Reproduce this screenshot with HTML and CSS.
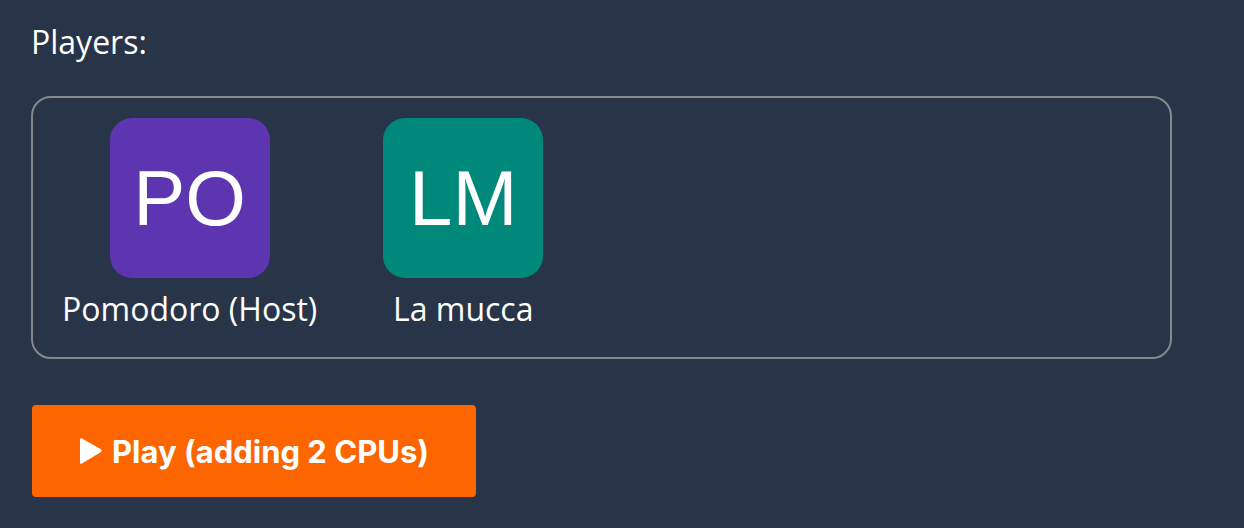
FILE: index.html
```html
<!DOCTYPE html>
<html lang="en">
<head>
<meta charset="utf-8">
<title>Lobby</title>
<link rel="stylesheet" href="styles.css">
</head>
<body>
  <main class="lobby">
    <h2 class="lobby-title">Players:</h2>
    <section class="player-list">
      <div class="player">
        <div class="avatar avatar-purple">PO</div>
        <div class="player-name">Pomodoro (Host)</div>
      </div>
      <div class="player">
        <div class="avatar avatar-teal">LM</div>
        <div class="player-name">La mucca</div>
      </div>
    </section>
    <button class="play-button" type="button">
      <svg class="play-icon" viewBox="0 0 24 28" width="24" height="28" aria-hidden="true">
        <path d="M3 1.5 L22 12.2 Q23.6 13.6 22 15 L3 26.5 Q1 27.6 1 25.2 V2.8 Q1 0.4 3 1.5 Z" fill="#fff"/>
      </svg>
      <span>Play (adding 2 CPUs)</span>
    </button>
  </main>
</body>
</html>
```

FILE: styles.css
```css
html, body {
  margin: 0;
  padding: 0;
  background: #283447;
}

body {
  font-family: "Open Sans", "Noto Sans", sans-serif;
  color: #ffffff;
}

.lobby {
  padding: 22px 31px 0 31px;
  display: flex;
  flex-direction: column;
  align-items: flex-start;
}

.lobby-title {
  margin: 0;
  font-size: 32px;
  font-weight: 400;
  line-height: 40px;
}

.player-list {
  box-sizing: border-box;
  width: 1141px;
  margin-top: 34px;
  border: 2px solid #83878e;
  border-radius: 20px;
  padding: 20px 30px 28px 29px;
  display: flex;
  gap: 66px;
  align-items: flex-start;
}

.player {
  display: flex;
  flex-direction: column;
  align-items: center;
}

.avatar {
  width: 160px;
  height: 160px;
  border-radius: 22px;
  display: flex;
  align-items: center;
  justify-content: center;
  font-family: "Liberation Sans", Arial, sans-serif;
  font-size: 78px;
  color: #ffffff;
}

.avatar-purple {
  background: #5e35b1;
}

.avatar-teal {
  background: #00897b;
}

.player-name {
  margin-top: 11px;
  font-size: 32px;
  line-height: 40px;
  white-space: nowrap;
}

.play-button {
  margin-top: 46px;
  margin-left: 1px;
  height: 92px;
  padding: 0 47px;
  border: none;
  border-radius: 4px;
  background: #fc6500;
  color: #ffffff;
  font-family: "Inter", "Liberation Sans", sans-serif;
  font-weight: 700;
  font-size: 31px;
  display: flex;
  align-items: center;
  gap: 9px;
  cursor: pointer;
}

.play-icon {
  display: block;
  flex: none;
}
```
